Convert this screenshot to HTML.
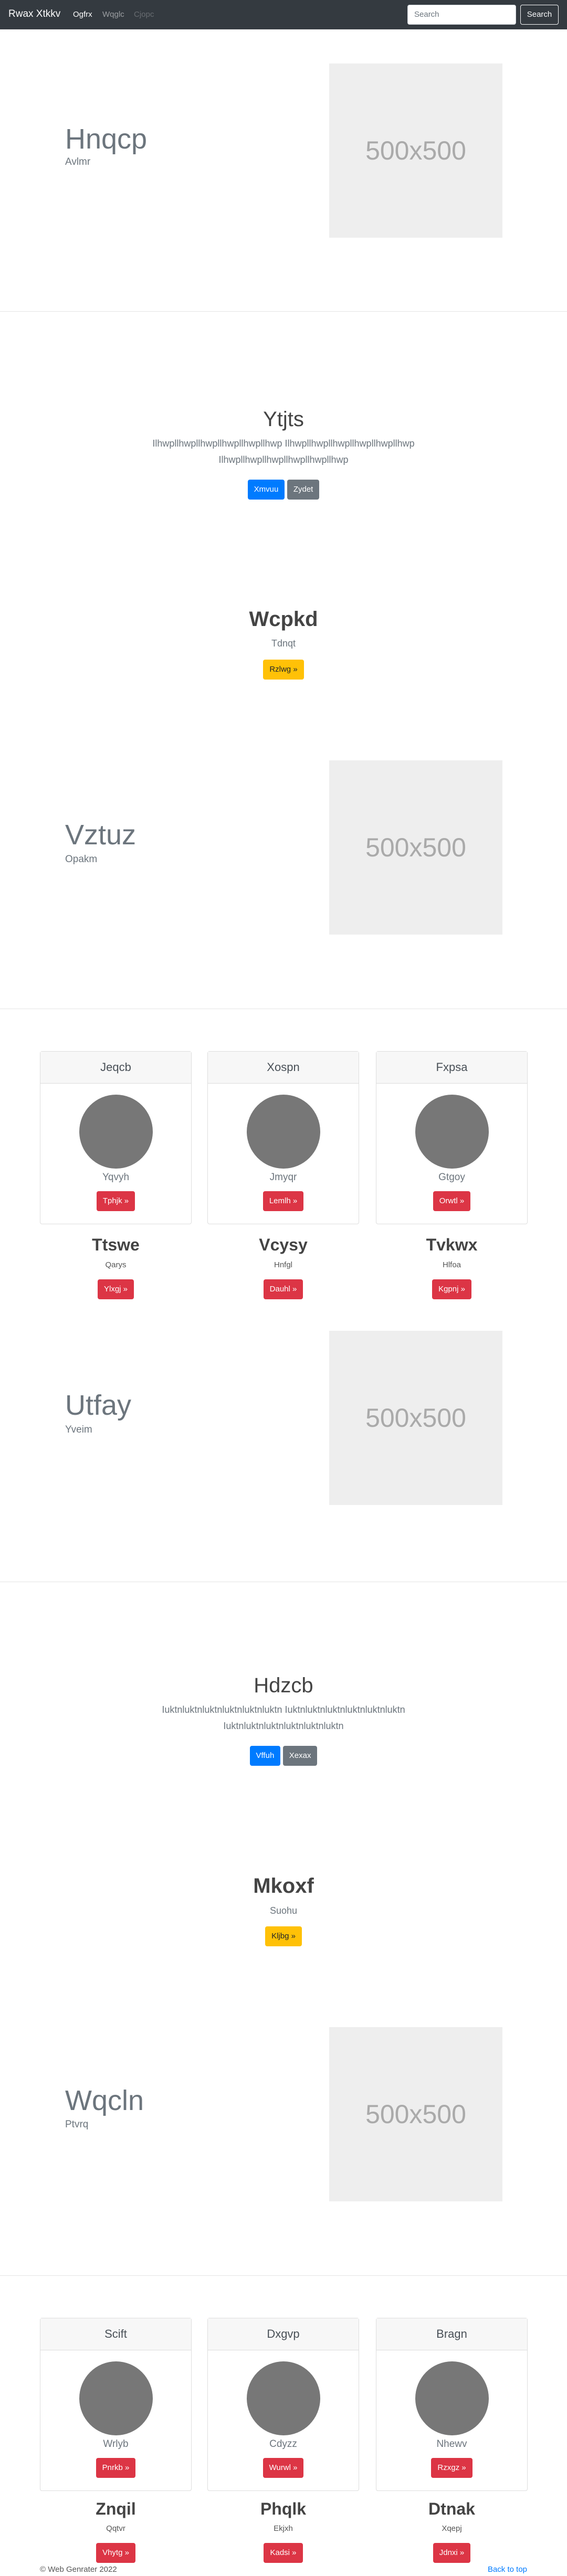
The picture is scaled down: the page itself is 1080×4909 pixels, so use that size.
<!DOCTYPE html>
<html><head><meta charset="utf-8">
<style>
*{box-sizing:border-box;margin:0;padding:0}
html,body{width:1080px;height:4909px;background:#fff;overflow:hidden}
body{position:relative;font-family:"Liberation Sans",sans-serif;color:#212529}
.a{position:absolute}
.nav{left:0;top:0;width:1080px;height:56px;background:#343a40}
.c{left:0;width:1080px;text-align:center}
.btn{display:inline-block;height:38px;line-height:38px;padding:0 12px;font-size:15px;border-radius:4px;color:#fff;vertical-align:top}
.hr{left:0;width:1080px;height:1px;background:#e5e5e5}
.img{background:#eee;color:#aaa;font-size:50px;display:flex;align-items:center;justify-content:center;width:330px;height:332px;left:627px}
.ht{left:124px;font-size:54px;color:#6c757d;font-weight:300;line-height:60px}
.hs{left:124px;font-size:19px;color:#6c757d;font-weight:300;line-height:24px}
.card{width:289px;height:330px;border:1px solid #ddd;border-radius:4px;background:#fff}
.ch{height:61px;background:#f7f7f7;border-bottom:1px solid #ddd;text-align:center;line-height:60px;font-size:22px;color:#495057}
.circ{width:140px;height:141px;border-radius:50%;background:#777;margin:21px auto 0}
.cn{text-align:center;font-size:19px;color:#6c757d;margin-top:2px;line-height:30px}
.cb{text-align:center;margin-top:11px}
.red{background:#dc3545}
</style></head><body>
<div class="a nav">
 <div class="a" style="left:16px;top:14px;font-size:19px;color:#fff;line-height:26px">Rwax Xtkkv</div>
 <div class="a" style="left:139px;top:17px;font-size:15px;color:#fff;line-height:22px">Ogfrx</div>
 <div class="a" style="left:195px;top:17px;font-size:15px;color:rgba(255,255,255,.5);line-height:22px">Wqglc</div>
 <div class="a" style="left:255px;top:17px;font-size:15px;color:rgba(255,255,255,.25);line-height:22px">Cjopc</div>
 <div class="a" style="left:776px;top:9px;width:207px;height:38px;background:#fff;border:1px solid #ced4da;border-radius:4px;padding-left:12px;line-height:36px;font-size:15px;color:#6c757d">Search</div>
 <div class="a" style="left:991px;top:9px;width:73px;height:38px;border:1px solid #f8f9fa;border-radius:4px;text-align:center;line-height:36px;font-size:15px;color:#f8f9fa">Search</div>
</div>

<!-- hero 1 -->
<div class="a img" style="top:121px">500x500</div>
<div class="a ht" style="top:235px">Hnqcp</div>
<div class="a hs" style="top:297px">Avlmr</div>
<div class="a hr" style="top:593px"></div>

<!-- jumbo 1 -->
<div class="a c" style="top:775px;font-size:40px;font-weight:300;color:#444;line-height:48px">Ytjts</div>
<div class="a c" style="top:830px;font-size:18px;font-weight:300;color:#6c757d;line-height:31px">Ilhwpllhwpllhwpllhwpllhwpllhwp Ilhwpllhwpllhwpllhwpllhwpllhwp<br>Ilhwpllhwpllhwpllhwpllhwpllhwp</div>
<div class="a c" style="top:914px"><span class="btn" style="background:#007bff">Xmvuu</span> <span class="btn" style="background:#6c757d">Zydet</span></div>

<div class="a c" style="top:1156px;font-size:40px;font-weight:bold;color:#444;line-height:48px">Wcpkd</div>
<div class="a c" style="top:1214px;font-size:18px;font-weight:300;color:#6c757d;line-height:24px">Tdnqt</div>
<div class="a c" style="top:1257px"><span class="btn" style="background:#ffc107;color:#212529">Rzlwg »</span></div>

<!-- hero 2 -->
<div class="a img" style="top:1449px">500x500</div>
<div class="a ht" style="top:1561px">Vztuz</div>
<div class="a hs" style="top:1626px">Opakm</div>
<div class="a hr" style="top:1922px"></div>

<!-- cards 1 -->
<div class="a card" style="left:76px;top:2003px"><div class="ch">Jeqcb</div><div class="circ"></div><div class="cn">Yqvyh</div><div class="cb"><span class="btn red">Tphjk »</span></div></div>
<div class="a card" style="left:395px;top:2003px"><div class="ch">Xospn</div><div class="circ"></div><div class="cn">Jmyqr</div><div class="cb"><span class="btn red">Lemlh »</span></div></div>
<div class="a card" style="left:716px;top:2003px"><div class="ch">Fxpsa</div><div class="circ"></div><div class="cn">Gtgoy</div><div class="cb"><span class="btn red">Orwtl »</span></div></div>

<div class="a" style="left:76px;top:2352px;width:289px;text-align:center"><div style="font-size:32px;font-weight:bold;color:#444;line-height:40px">Ttswe</div><div style="font-size:15px;color:#555;line-height:20px;margin-top:9px">Qarys</div><div style="margin-top:17px"><span class="btn red">Ylxgj »</span></div></div>
<div class="a" style="left:395px;top:2352px;width:289px;text-align:center"><div style="font-size:32px;font-weight:bold;color:#444;line-height:40px">Vcysy</div><div style="font-size:15px;color:#555;line-height:20px;margin-top:9px">Hnfgl</div><div style="margin-top:17px"><span class="btn red">Dauhl »</span></div></div>
<div class="a" style="left:716px;top:2352px;width:289px;text-align:center"><div style="font-size:32px;font-weight:bold;color:#444;line-height:40px">Tvkwx</div><div style="font-size:15px;color:#555;line-height:20px;margin-top:9px">Hlfoa</div><div style="margin-top:17px"><span class="btn red">Kgpnj »</span></div></div>

<!-- hero 3 -->
<div class="a img" style="top:2536px">500x500</div>
<div class="a ht" style="top:2648px">Utfay</div>
<div class="a hs" style="top:2713px">Yveim</div>
<div class="a hr" style="top:3014px"></div>

<!-- jumbo 2 -->
<div class="a c" style="top:3188px;font-size:40px;font-weight:300;color:#444;line-height:48px">Hdzcb</div>
<div class="a c" style="top:3243px;font-size:18px;font-weight:300;color:#6c757d;line-height:31px">Iuktnluktnluktnluktnluktnluktn Iuktnluktnluktnluktnluktnluktn<br>Iuktnluktnluktnluktnluktnluktn</div>
<div class="a c" style="top:3327px"><span class="btn" style="background:#007bff">Vffuh</span> <span class="btn" style="background:#6c757d">Xexax</span></div>

<div class="a c" style="top:3570px;font-size:40px;font-weight:bold;color:#444;line-height:48px">Mkoxf</div>
<div class="a c" style="top:3629px;font-size:18px;font-weight:300;color:#6c757d;line-height:24px">Suohu</div>
<div class="a c" style="top:3671px"><span class="btn" style="background:#ffc107;color:#212529">Kljbg »</span></div>

<!-- hero 4 -->
<div class="a img" style="top:3863px">500x500</div>
<div class="a ht" style="top:3973px">Wqcln</div>
<div class="a hs" style="top:4037px">Ptvrq</div>
<div class="a hr" style="top:4336px"></div>

<!-- cards 2 -->
<div class="a card" style="left:76px;top:4417px"><div class="ch">Scift</div><div class="circ"></div><div class="cn">Wrlyb</div><div class="cb"><span class="btn red">Pnrkb »</span></div></div>
<div class="a card" style="left:395px;top:4417px"><div class="ch">Dxgvp</div><div class="circ"></div><div class="cn">Cdyzz</div><div class="cb"><span class="btn red">Wurwl »</span></div></div>
<div class="a card" style="left:716px;top:4417px"><div class="ch">Bragn</div><div class="circ"></div><div class="cn">Nhewv</div><div class="cb"><span class="btn red">Rzxgz »</span></div></div>

<div class="a" style="left:76px;top:4761px;width:289px;text-align:center"><div style="font-size:32px;font-weight:bold;color:#444;line-height:40px">Znqil</div><div style="font-size:15px;color:#555;line-height:20px;margin-top:8px">Qqtvr</div><div style="margin-top:17px"><span class="btn red">Vhytg »</span></div></div>
<div class="a" style="left:395px;top:4761px;width:289px;text-align:center"><div style="font-size:32px;font-weight:bold;color:#444;line-height:40px">Phqlk</div><div style="font-size:15px;color:#555;line-height:20px;margin-top:8px">Ekjxh</div><div style="margin-top:17px"><span class="btn red">Kadsi »</span></div></div>
<div class="a" style="left:716px;top:4761px;width:289px;text-align:center"><div style="font-size:32px;font-weight:bold;color:#444;line-height:40px">Dtnak</div><div style="font-size:15px;color:#555;line-height:20px;margin-top:8px">Xqepj</div><div style="margin-top:17px"><span class="btn red">Jdnxi »</span></div></div>

<div class="a" style="left:76px;top:4887px;font-size:15px;color:#555;line-height:20px">© Web Genrater 2022</div>
<div class="a" style="right:76px;top:4887px;font-size:15px;color:#007bff;line-height:20px">Back to top</div>
</body></html>
